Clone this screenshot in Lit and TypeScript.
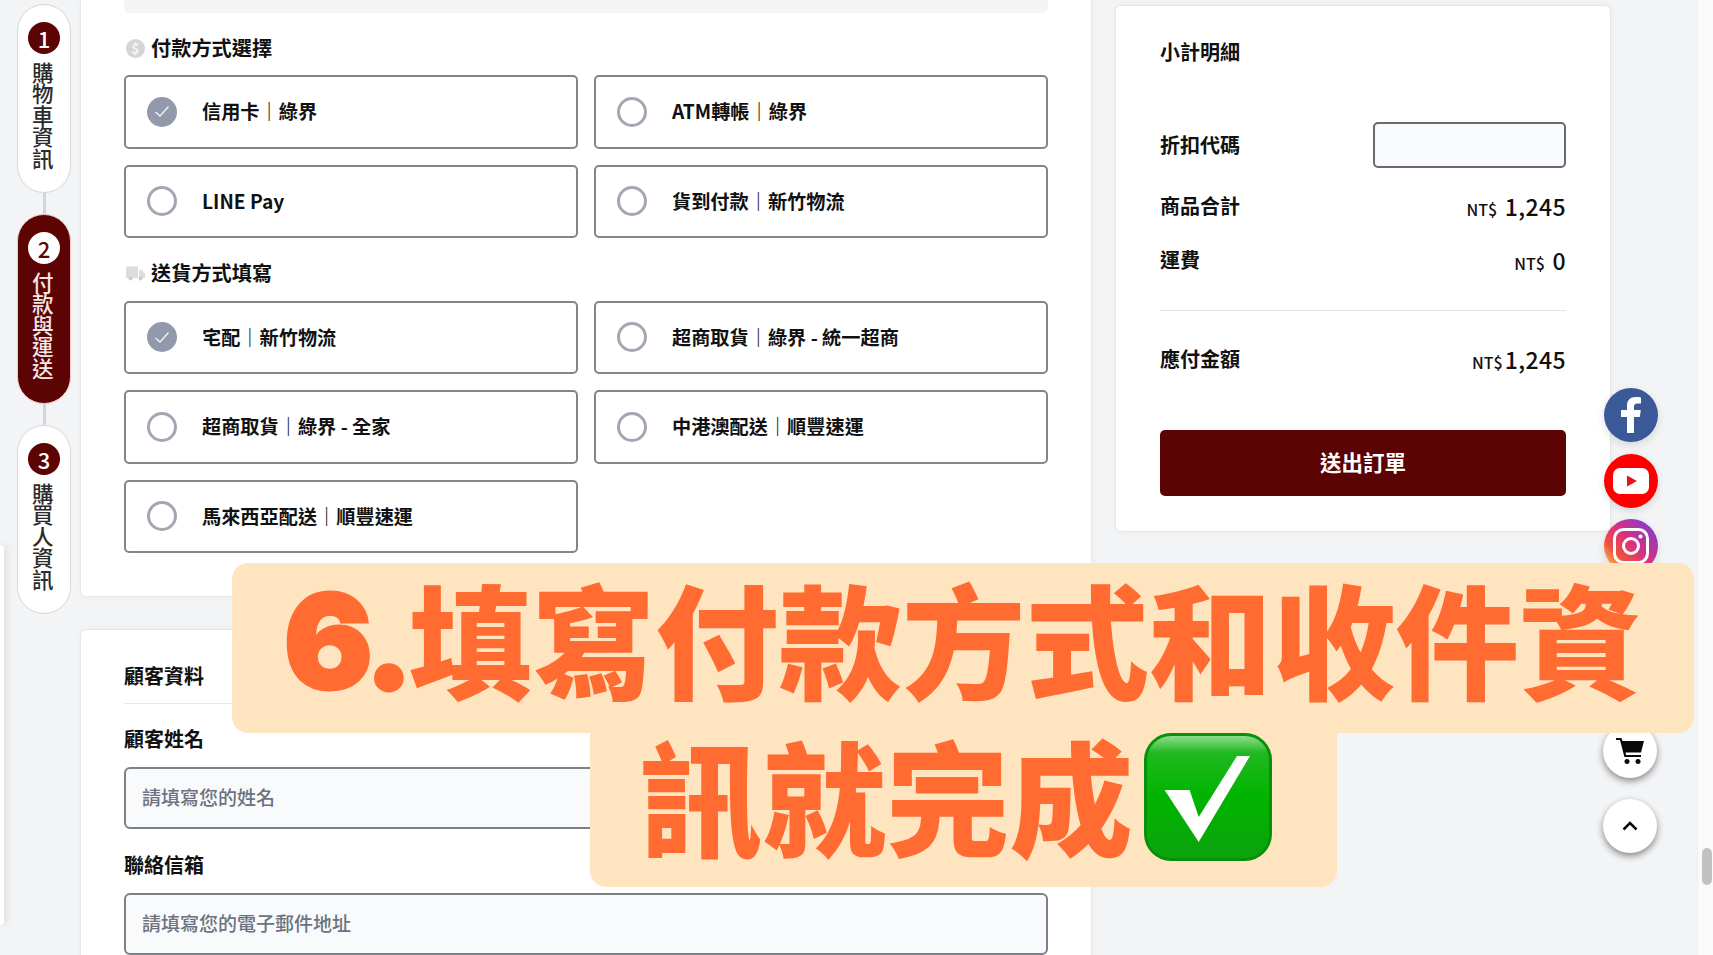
import { LitElement, html, css, svg } from 'lit';
import { customElement } from 'lit/decorators.js';

const payments = [
  { label: '信用卡｜綠界', on: true },
  { label: 'ATM轉帳｜綠界', on: false },
  { label: 'LINE Pay', on: false },
  { label: '貨到付款｜新竹物流', on: false },
];

const shipping = [
  { label: '宅配｜新竹物流', on: true },
  { label: '超商取貨｜綠界 - 統一超商', on: false },
  { label: '超商取貨｜綠界 - 全家', on: false },
  { label: '中港澳配送｜順豐速運', on: false },
  { label: '馬來西亞配送｜順豐速運', on: false },
];

const steps = [
  { no: 1, label: '購物車資訊', on: false },
  { no: 2, label: '付款與運送', on: true },
  { no: 3, label: '購買人資訊', on: false },
];

@customElement('app-root')
export class AppRoot extends LitElement {
  static styles = css`
    :host {
      display: block;
      position: relative;
      height: 955px;
      overflow: hidden;
      background: #f3f4f6;
      color: #111;
      font-family: 'Noto Sans CJK TC', 'Noto Sans', sans-serif;
    }
    .page {
      display: flex;
      height: 955px;
    }
    .steps {
      flex: none;
      width: 54px;
      margin: 4px 9px 0 17px;
      display: flex;
      flex-direction: column;
      align-items: center;
    }
    .step {
      box-sizing: border-box;
      flex: none;
      width: 54px;
      height: 189px;
      padding-top: 17px;
      display: flex;
      flex-direction: column;
      align-items: center;
      gap: 8px;
      background: #fff;
      border: 1px solid #d4d6da;
      border-radius: 27px;
      font-size: 21.5px;
      font-weight: 500;
      line-height: 1;
      color: #2b2b2b;
    }
    .step.on {
      height: 190px;
      background: #5c0404;
      border-color: #f3c9c9;
      color: #f5e6e6;
    }
    .step-no {
      flex: none;
      width: 32px;
      height: 32px;
      display: flex;
      align-items: center;
      justify-content: center;
      border-radius: 50%;
      background: #5c0404;
      color: #fff;
      font-size: 22px;
    }
    .step.on .step-no {
      background: #fff;
      color: #5c0404;
    }
    .step-label {
      writing-mode: vertical-rl;
      margin-left: -3px;
    }
    .link {
      flex: none;
      width: 3px;
      height: 21px;
      background: #d1d5db;
    }
    .main {
      flex: none;
      width: 1012px;
      display: flex;
      flex-direction: column;
      gap: 32px;
    }
    .card {
      box-sizing: border-box;
      background: #fff;
      border: 1px solid #e5e7eb;
      border-radius: 6px;
      box-shadow: 0 0 6px rgba(0, 0, 0, 0.04);
    }
    .pay {
      flex: none;
      height: 597px;
      padding: 0 43px;
      border-top: 0;
      border-radius: 0 0 6px 6px;
    }
    .strip {
      height: 13px;
      margin-bottom: 21px;
      background: #f3f4f6;
      border-radius: 0 0 6px 6px;
    }
    .head {
      box-sizing: border-box;
      height: 28px;
      display: flex;
      align-items: center;
      gap: 6px;
      margin-bottom: 13px;
      font-size: 20.2px;
      font-weight: 600;
      line-height: 1;
    }
    .head svg {
      flex: none;
      margin-left: 2px;
    }
    .head.second {
      margin-top: 21.5px;
      margin-bottom: 13px;
    }
    .options {
      display: grid;
      grid-template-columns: 1fr 1fr;
      grid-auto-rows: 73.5px;
      gap: 16px;
    }
    .option {
      box-sizing: border-box;
      display: flex;
      align-items: center;
      gap: 25px;
      padding-left: 21px;
      border: 2px solid #82858c;
      border-radius: 5px;
      font-size: 19.2px;
      font-weight: 600;
      line-height: 1;
    }
    .radio {
      box-sizing: border-box;
      flex: none;
      width: 30px;
      height: 30px;
      display: flex;
      align-items: center;
      justify-content: center;
      border: 3px solid #a3a7b1;
      border-radius: 50%;
    }
    .radio.on {
      background: #9299aa;
      border: 0;
    }
    .customer {
      flex: 1;
      padding: 33px 43px 0;
      border-radius: 6px 6px 0 0;
    }
    .title {
      box-sizing: border-box;
      height: 28px;
      padding-bottom: 2px;
      display: flex;
      align-items: center;
      font-size: 20px;
      font-weight: 600;
      line-height: 1;
    }
    .rule {
      height: 1px;
      margin: 12px 0 22px;
      background: #e5e7eb;
    }
    .field {
      box-sizing: border-box;
      height: 62px;
      margin: 13px 0 23px;
      padding: 0 0 3px 16px;
      display: flex;
      align-items: center;
      background: #f9fafb;
      border: 2px solid #7b8089;
      border-radius: 6px;
      color: #6b7280;
      font-size: 19px;
      font-weight: 500;
      line-height: 1;
    }
    .aside {
      flex: none;
      box-sizing: border-box;
      width: 496px;
      height: 527px;
      margin: 5px 0 0 23px;
      padding: 32px 44px 0;
    }
    .row {
      display: flex;
      align-items: center;
      justify-content: space-between;
      height: 28px;
      font-size: 20px;
      font-weight: 600;
      line-height: 1;
    }
    .row.code {
      height: 46px;
      margin-top: 56px;
    }
    .code-box {
      box-sizing: border-box;
      width: 193px;
      height: 46px;
      background: #f9fafb;
      border: 2px solid #666a72;
      border-radius: 5px;
    }
    .row.goods {
      margin-top: 24px;
    }
    .row.fee {
      margin-top: 26px;
    }
    .price {
      display: flex;
      align-items: baseline;
      gap: 7.5px;
      font-size: 23px;
      font-weight: 500;
      letter-spacing: 0.4px;
    }
    .price.tight {
      gap: 2px;
    }
    .price small {
      font-size: 16px;
      letter-spacing: 0;
    }
    .sum {
      height: 1px;
      margin: 36px 0 34px;
      background: #e5e7eb;
    }
    .submit {
      box-sizing: border-box;
      height: 66px;
      margin-top: 57px;
      padding-bottom: 2px;
      display: flex;
      align-items: center;
      justify-content: center;
      background: #5c0404;
      border-radius: 5px;
      color: #fff;
      font-size: 21.5px;
      font-weight: 600;
      line-height: 1;
    }
    .scrollbar {
      position: absolute;
      top: 0;
      right: 0;
      width: 15px;
      height: 955px;
      background: #fafafa;
      border-left: 1px solid #eceef0;
    }
    .thumb {
      position: absolute;
      top: 848px;
      right: 1px;
      width: 10px;
      height: 37px;
      background: #c1c1c1;
      border-radius: 5px;
    }
    .edge {
      position: absolute;
      left: 0;
      top: 545px;
      width: 4px;
      height: 380px;
      background: #fff;
      border-radius: 0 6px 6px 0;
      box-shadow: 1px 0 8px rgba(0, 0, 0, 0.18);
    }
    .float {
      position: absolute;
      left: 1604px;
      width: 54px;
      height: 54px;
      display: flex;
      align-items: center;
      justify-content: center;
      border-radius: 50%;
      box-shadow: 0 3px 8px rgba(0, 0, 0, 0.12);
    }
    .fb { top: 388px; background: #3b5998; }
    .yt { top: 454px; background: #fe0000; }
    .ig {
      top: 519px;
      background: linear-gradient(45deg, #fcc45c 8%, #f0503c 30%, #d62f86 55%, #8f3bc0 85%);
    }
    .cart, .up {
      background: #fff;
      box-shadow: 0 3px 7px rgba(0, 0, 0, 0.45);
    }
    .cart { top: 724px; left: 1603px; }
    .up { top: 799px; left: 1603px; }
    .banner {
      position: absolute;
      left: 232px;
      top: 563px;
      width: 1462px;
      display: flex;
      flex-direction: column;
      align-items: center;
      color: #ff6b30;
      font-family: 'Inter', 'Noto Sans CJK TC', sans-serif;
      font-size: 123.4px;
      font-weight: 900;
      line-height: 1;
    }
    .line {
      box-sizing: border-box;
      display: flex;
      justify-content: center;
      background: #ffe4c0;
      white-space: nowrap;
    }
    .line.one {
      width: 1462px;
      height: 170px;
      align-items: center;
      padding-bottom: 4px;
      border-radius: 16px;
    }
    .six {
      margin-bottom: 11px;
      font-size: 132px;
      letter-spacing: -5px;
      -webkit-text-stroke: 3px #ff6b30;
    }
    .line.two {
      width: 747px;
      height: 154px;
      gap: 10px;
      padding-right: 14px;
      border-radius: 0 0 16px 16px;
    }
    .line.two span {
      margin-top: 8px;
    }
    .line.two svg {
      flex: none;
      margin-top: -1px;
    }
  `;

  private check() {
    return html`<svg width="16" height="13" viewBox="0 0 16 13" fill="none">
      <path d="M1.5 7l4.5 4L14.5 1.5" stroke="#f2f3f6" stroke-width="1.3" />
    </svg>`;
  }

  private option(o: { label: string; on: boolean }) {
    return html`<div class="option">
      <span class="radio ${o.on ? 'on' : ''}">${o.on ? this.check() : ''}</span>
      <span>${o.label}</span>
    </div>`;
  }

  private emoji() {
    return svg`<svg width="130" height="130" viewBox="0 0 130 130">
      <defs>
        <linearGradient id="g" x1="0" y1="0" x2="0" y2="1">
          <stop offset="0" stop-color="#8fdc8a" />
          <stop offset="0.14" stop-color="#1fb81f" />
          <stop offset="0.5" stop-color="#00b400" />
          <stop offset="1" stop-color="#0ca30c" />
        </linearGradient>
      </defs>
      <rect x="1" y="1" width="128" height="128" rx="27" fill="#098f09" />
      <rect x="4" y="4" width="122" height="122" rx="24" fill="url(#g)" />
      <path d="M21.6 58H46.600L55.700 85 94 24H107L55.700 110z" fill="#fff" />
    </svg>`;
  }

  render() {
    return html`
      <div class="page">
        <nav class="steps">
          ${steps.map(
            (s, i) => html`
              ${i ? html`<div class="link"></div>` : ''}
              <div class="step ${s.on ? 'on' : ''}">
                <span class="step-no">${s.no}</span>
                <span class="step-label">${s.label}</span>
              </div>
            `
          )}
        </nav>

        <div class="main">
          <section class="card pay">
            <div class="strip"></div>
            <div class="head">
              <svg width="19" height="19" viewBox="0 0 19 19">
                <circle cx="9.5" cy="9.5" r="9.5" fill="#d4d5d7" />
                <text x="9.5" y="14.5" text-anchor="middle" font-size="14" fill="#f4f4f4">$</text>
              </svg>
              付款方式選擇
            </div>
            <div class="options">${payments.map((o) => this.option(o))}</div>
            <div class="head second">
              <svg width="19" height="15" viewBox="0 0 19 15">
                <path d="M0 2a1.5 1.5 0 0 1 1.5-1.5H12V12H0zM13 4h3l3 4v4h-6z" fill="#dcdddf" />
                <circle cx="4.5" cy="12.5" r="2" fill="#c9cacc" />
                <circle cx="14.5" cy="12.5" r="2" fill="#c9cacc" />
              </svg>
              送貨方式填寫
            </div>
            <div class="options">${shipping.map((o) => this.option(o))}</div>
          </section>

          <section class="card customer">
            <div class="title">顧客資料</div>
            <div class="rule"></div>
            <div class="title">顧客姓名</div>
            <div class="field">請填寫您的姓名</div>
            <div class="title">聯絡信箱</div>
            <div class="field">請填寫您的電子郵件地址</div>
          </section>
        </div>

        <aside class="card aside">
          <div class="row">小計明細</div>
          <div class="row code"><span>折扣代碼</span><div class="code-box"></div></div>
          <div class="row goods">
            <span>商品合計</span>
            <span class="price"><small>NT$</small>1,245</span>
          </div>
          <div class="row fee">
            <span>運費</span>
            <span class="price"><small>NT$</small>0</span>
          </div>
          <div class="sum"></div>
          <div class="row">
            <span>應付金額</span>
            <span class="price tight"><small>NT$</small>1,245</span>
          </div>
          <div class="submit">送出訂單</div>
        </aside>
      </div>

      <div class="edge"></div>
      <div class="scrollbar"><div class="thumb"></div></div>

      <div class="float fb">
        <svg width="26" height="36" viewBox="0 0 26 36">
          <path d="M9 36V20H3v-7h6V8.500C9 3 12.500 0 17.500 0 20 0 22 .2 23 .4v6.100h-3.600C16.800 6.500 16 7.800 16 9.700V13h6.800l-1 7H16v16z" fill="#fff" />
        </svg>
      </div>
      <div class="float yt">
        <svg width="36" height="26" viewBox="0 0 36 26">
          <rect width="36" height="26" rx="7" fill="#fff" />
          <path d="M14 7.500l10 5.500-10 5.500z" fill="#e8101a" />
        </svg>
      </div>
      <div class="float ig">
        <svg width="36" height="36" viewBox="0 0 36 36" fill="none" stroke="#fff" stroke-width="3">
          <rect x="1.500" y="1.500" width="33" height="33" rx="9" />
          <circle cx="18" cy="18" r="7.500" />
          <circle cx="27.500" cy="8.500" r="2" fill="#fff" stroke="none" />
        </svg>
      </div>
      <div class="float cart">
        <svg width="28" height="26" viewBox="0 0 28 26">
          <path d="M0 0h5.500l1 3H28l-3 11.500H9.500l.6 2.500H25v2H8.400L4 2H0z" fill="#0a0a0a" />
          <circle cx="11" cy="23.500" r="2.500" fill="#0a0a0a" />
          <circle cx="22" cy="23.500" r="2.500" fill="#0a0a0a" />
        </svg>
      </div>
      <div class="float up">
        <svg width="16" height="10" viewBox="0 0 16 10" fill="none">
          <path d="M1.500 8.500L8 2l6.500 6.500" stroke="#0a0a0a" stroke-width="2.500" />
        </svg>
      </div>

      <div class="banner">
        <div class="line one"><span class="six">6.</span>填寫付款方式和收件資</div>
        <div class="line two"><span>訊就完成</span>${this.emoji()}</div>
      </div>
    `;
  }
}
